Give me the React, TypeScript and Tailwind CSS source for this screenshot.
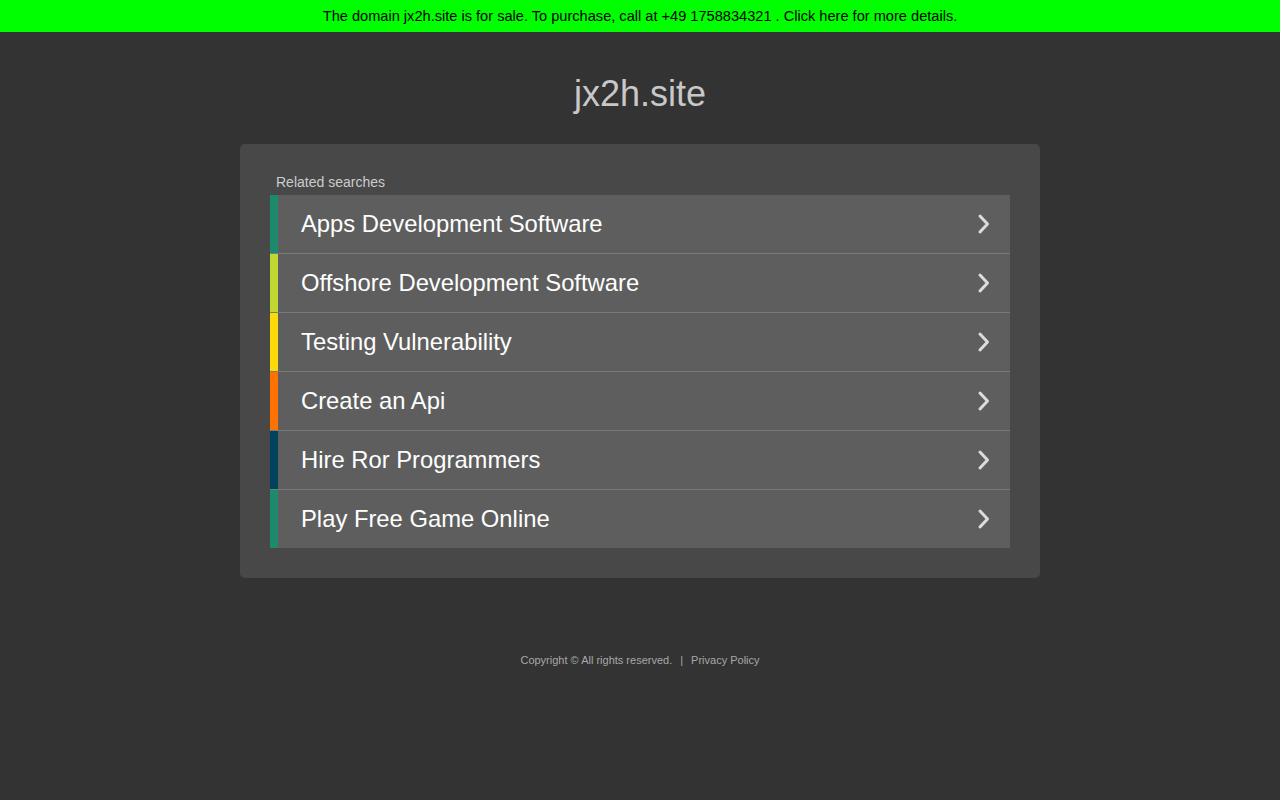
const searches = [
  { label: "Apps Development Software", color: "bg-[#1d8a6d]" },
  { label: "Offshore Development Software", color: "bg-[#c0d831]" },
  { label: "Testing Vulnerability", color: "bg-[#fddb0b]" },
  { label: "Create an Api", color: "bg-[#ff7100]" },
  { label: "Hire Ror Programmers", color: "bg-[#01435a]" },
  { label: "Play Free Game Online", color: "bg-[#1d8a6d]" },
];

function Chevron() {
  return (
    <svg width="14" height="22" viewBox="0 0 14 22" className="text-[#dcdcdc]">
      <polyline
        points="3,3 10.5,11 3,19"
        fill="none"
        stroke="currentColor"
        strokeWidth="3"
        strokeLinecap="round"
        strokeLinejoin="round"
      />
    </svg>
  );
}

export default function App() {
  return (
    <div className="min-h-[800px] bg-[#333333] font-['Liberation_Sans',Arial,sans-serif]">
      {/* sale banner */}
      <div className="h-8 bg-[#00ff00] flex items-center justify-center pt-0.5 text-[14.6px] text-black">
        The domain jx2h.site is for sale. To purchase, call at +49 1758834321 . Click here for more details.
      </div>

      <h1 className="mt-[41px] mb-[29px] text-center text-[36px] leading-[42px] text-[#c8c8c8]">jx2h.site</h1>

      <div className="mx-auto w-[800px] rounded-[5px] bg-[#484848] p-[30px]">
        <div className="mb-1 pl-1.5 text-[14px] leading-[17px] text-[#cccccc]">Related searches</div>
        <div>
          {searches.map((s, i) => (
            <div
              key={s.label}
              className={`flex items-stretch bg-[#5e5e5e] ${i > 0 ? "h-[59px] border-t border-[#7a7a7a]" : "h-[58px]"}`}
            >
              <div className={`w-2 ${s.color}`} />
              <div className="flex flex-1 items-center justify-between pl-[23px] pr-[19px]">
                <span className="text-[23.8px] text-white">{s.label}</span>
                <Chevron />
              </div>
            </div>
          ))}
        </div>
      </div>

      <div className="mt-[74px] text-center text-[11px] leading-4 text-[#a8a8a8]">
        Copyright © All rights reserved.
        <span className="mx-2">|</span>
        Privacy Policy
      </div>
    </div>
  );
}
